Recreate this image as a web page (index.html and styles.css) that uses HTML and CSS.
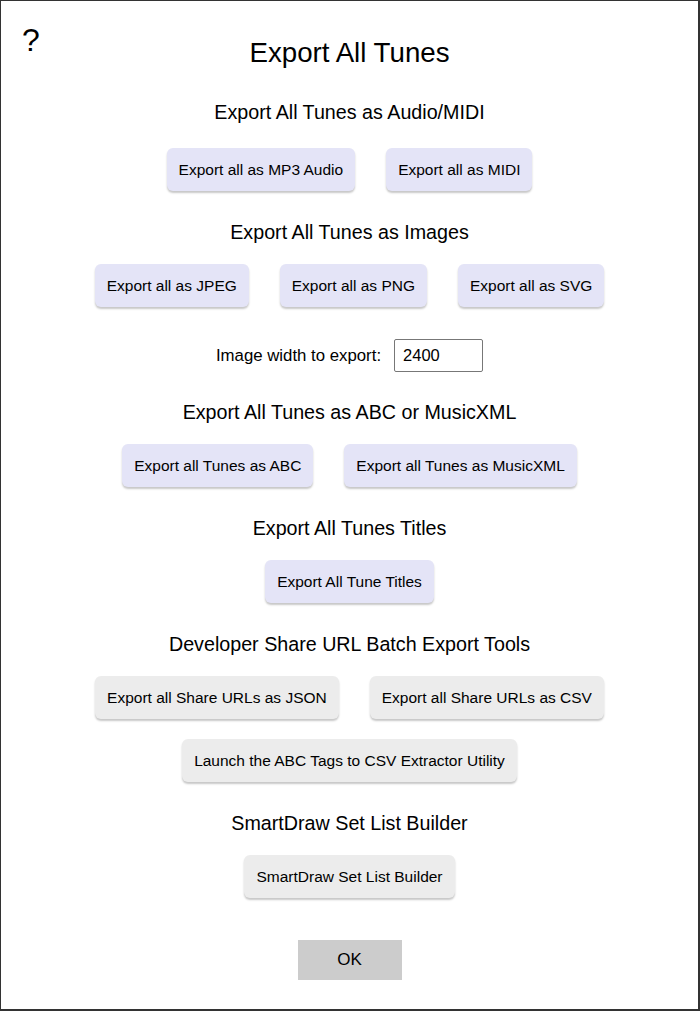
FILE: index.html
```html
<!DOCTYPE html>
<html>
<head>
<meta charset="utf-8">
<link rel="stylesheet" href="styles.css">
</head>
<body>
<div class="dialog">
  <div class="help">?</div>
  <h1 class="title">Export All Tunes</h1>

  <h2 class="heading heading-first">Export All Tunes as Audio/MIDI</h2>
  <div class="row row-first">
    <button class="btn">Export all as MP3 Audio</button>
    <button class="btn">Export all as MIDI</button>
  </div>

  <h2 class="heading">Export All Tunes as Images</h2>
  <div class="row">
    <button class="btn">Export all as JPEG</button>
    <button class="btn">Export all as PNG</button>
    <button class="btn">Export all as SVG</button>
  </div>
  <div class="width-row">
    <label class="width-label" for="w">Image width to export:</label>
    <input id="w" class="width-input" type="text" value="2400">
  </div>

  <h2 class="heading heading-after-input">Export All Tunes as ABC or MusicXML</h2>
  <div class="row">
    <button class="btn">Export all Tunes as ABC</button>
    <button class="btn">Export all Tunes as MusicXML</button>
  </div>

  <h2 class="heading">Export All Tunes Titles</h2>
  <div class="row">
    <button class="btn">Export All Tune Titles</button>
  </div>

  <h2 class="heading">Developer Share URL Batch Export Tools</h2>
  <div class="row">
    <button class="btn btn-gray">Export all Share URLs as JSON</button>
    <button class="btn btn-gray">Export all Share URLs as CSV</button>
  </div>
  <div class="row row-second">
    <button class="btn btn-gray">Launch the ABC Tags to CSV Extractor Utility</button>
  </div>

  <h2 class="heading">SmartDraw Set List Builder</h2>
  <div class="row">
    <button class="btn btn-gray">SmartDraw Set List Builder</button>
  </div>

  <div class="ok-row">
    <button class="ok">OK</button>
  </div>
</div>
</body>
</html>
```

FILE: styles.css
```css
* { box-sizing: border-box; }
html, body { margin: 0; padding: 0; }
body {
  font-family: "Liberation Sans", Arial, sans-serif;
  color: #000;
  background: #fff;
}
.dialog {
  position: relative;
  width: 700px;
  height: 1011px;
  border: 1px solid #333;
  border-right-width: 2px;
  border-bottom-width: 2px;
  padding-top: 36px;
  display: flex;
  flex-direction: column;
  align-items: center;
}
.help {
  position: absolute;
  left: 21px;
  top: 23px;
  font-size: 32px;
  line-height: 32px;
}
.title {
  margin: 0;
  font-size: 27.7px;
  line-height: 32px;
  font-weight: normal;
}
.heading {
  margin: 30px 0 0;
  font-size: 19.7px;
  line-height: 22px;
  font-weight: normal;
}
.heading-first { margin-top: 32px; }
.heading-after-input { margin-top: 29px; }
.row {
  margin-top: 21px;
  display: flex;
  justify-content: center;
  gap: 31px;
}
.row-first { margin-top: 25px; }
.row-second { margin-top: 20px; }
.btn {
  font-family: "Liberation Sans", Arial, sans-serif;
  font-size: 15.5px;
  height: 43px;
  padding: 0 12px;
  border: none;
  border-radius: 6px;
  background: #e4e4f7;
  color: #000;
  box-shadow: 0 2px 2px rgba(0, 0, 0, 0.22);
}
.btn-gray {
  background: #ececec;
}
.width-row {
  margin-top: 32px;
  display: flex;
  align-items: center;
  gap: 13px;
}
.width-label {
  font-size: 16.8px;
}
.width-input {
  width: 89px;
  height: 33px;
  border: 1px solid #777;
  border-radius: 2px;
  padding: 0 8px;
  font-family: "Liberation Sans", Arial, sans-serif;
  font-size: 16.5px;
  color: #000;
}
.ok-row {
  margin-top: 42px;
}
.ok {
  width: 104px;
  height: 40px;
  border: none;
  border-radius: 0;
  background: #cccccc;
  font-family: "Liberation Sans", Arial, sans-serif;
  font-size: 17px;
  color: #000;
}
```
